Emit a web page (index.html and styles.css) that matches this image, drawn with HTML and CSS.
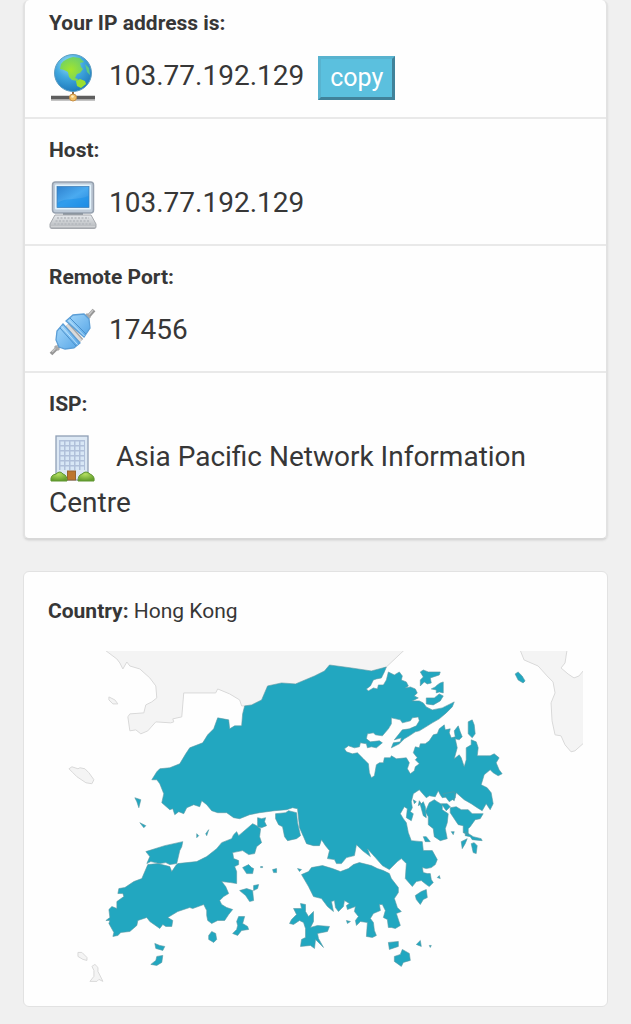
FILE: index.html
```html
<!DOCTYPE html>
<html lang="en">
<head>
  <meta charset="UTF-8">
  <meta name="viewport" content="width=device-width, initial-scale=1.0">
  <title>Your IP address</title>
  <link rel="stylesheet" href="styles.css">
</head>
<body>
  <div class="card info">
    <div class="row">
      <div class="label">Your IP address is:</div>
      <div class="value">
        <svg class="icon" viewBox="0 0 48 48">
          <defs>
            <radialGradient id="sea" cx="40%" cy="25%" r="75%">
              <stop offset="0" stop-color="#9be0f4"/>
              <stop offset=".5" stop-color="#41a8df"/>
              <stop offset="1" stop-color="#1f7bbd"/>
            </radialGradient>
            <radialGradient id="leaf" cx="45%" cy="55%" r="60%">
              <stop offset="0" stop-color="#a4e52b"/>
              <stop offset="1" stop-color="#6cd06a"/>
            </radialGradient>
          </defs>
          <path d="M24 36v7" stroke="#8a6a4a" stroke-width="2"/>
          <path d="M2 46h44" stroke="#c4c4c4" stroke-width="2"/>
          <path d="M2 43.500h44" stroke="#5e5e5e" stroke-width="3.500"/>
          <circle cx="24" cy="19" r="18.500" fill="url(#sea)" stroke="#5c9dc2"/>
          <path d="M12 10c3-4 7-6 12-7l7 1 4 4-4 1 1 4 2 2-3 4-3 1-2 4 3 1-1 2-5-1-3-3-1-5-4-2-4-1z" fill="url(#leaf)"/>
          <path d="M27 27l4-2 5 2 1 3-5 4-4-2z" fill="#9be02f"/>
          <path d="M36 10l4 4 1 7-3-3z" fill="#5cc985"/>
          <circle cx="24" cy="43.500" r="3.500" fill="#f3c164" stroke="#c99045"/>
          <circle cx="23.500" cy="42.500" r="1.300" fill="#fff0c0"/>
        </svg><span>103.77.192.129</span><button class="copy" type="button">copy</button>
      </div>
    </div>

    <div class="row">
      <div class="label">Host:</div>
      <div class="value">
        <svg class="icon" viewBox="0 0 48 48">
          <defs>
            <linearGradient id="screen" x1="0" y1="0" x2="1" y2="1">
              <stop offset="0" stop-color="#2f82cf"/>
              <stop offset=".5" stop-color="#4aaaf0"/>
              <stop offset="1" stop-color="#2388df"/>
            </linearGradient>
            <linearGradient id="keys" x1="0" y1="0" x2="0" y2="1">
              <stop offset="0" stop-color="#e6e9ec"/>
              <stop offset="1" stop-color="#b2b5b9"/>
            </linearGradient>
          </defs>
          <rect x="3.500" y="1" width="41" height="31" rx="3" fill="#bfcbd8" stroke="#96a1af" stroke-width="1.500"/>
          <rect x="6" y="3.500" width="36" height="25" rx="1" fill="#e3f3fc"/>
          <rect x="8" y="5.500" width="32" height="21" fill="url(#screen)" stroke="#3978b3" stroke-width=".7"/>
          <path d="M8.500 22c8-6 19-2 31-7v11h-31z" fill="#168fe9" opacity=".5"/>
          <path d="M14 32h20v3H14z" fill="#8b95a0"/>
          <path d="M6 34h36l5 9v3q0 1.500-2 1.500H3q-2 0-2-1.500v-3z" fill="url(#keys)" stroke="#a5a8ad"/>
          <path d="M8 37h32M6.500 40h35M5 43h38" stroke="#b4b8bd" stroke-width="1.500" stroke-dasharray="2 1.500"/>
          <path d="M2 45.500h44" stroke="#cfd1d4"/>
        </svg><span>103.77.192.129</span>
      </div>
    </div>

    <div class="row">
      <div class="label">Remote Port:</div>
      <div class="value">
        <svg class="icon" viewBox="0 0 48 48">
          <defs>
            <linearGradient id="plug" x1="0" y1="0" x2="1" y2="1">
              <stop offset="0" stop-color="#a5d8fb"/>
              <stop offset="1" stop-color="#55a5e6"/>
            </linearGradient>
          </defs>
          <path d="M2 46l9-9M37 11l8-9" stroke="#979797" stroke-width="3.800"/>
          <path d="M3 44l8-8M38 9l6-7" stroke="#c6c6c6" stroke-width="1.500"/>
          <path d="M6 38l4 4M37 6l4 4" stroke="#aaa" stroke-width="3"/>
          <path d="M18 17l14 16" stroke="#a5a5a5" stroke-width="6"/>
          <path d="M18 17l14 16" stroke="#dadada" stroke-width="3"/>
          <path d="M14 16L31 35 25 40 16 41 10 39 7 32 8 23z" fill="url(#plug)" stroke="#5b9ed6" stroke-width="1.300"/>
          <path d="M17 13l7-6 11-1 5 5 1 9-6 9z" fill="url(#plug)" stroke="#5b9ed6" stroke-width="1.300"/>
          <path d="M11 20l16 18M21 10l16 16" stroke="#4a8fca"/>
          <path d="M12.500 18.500l16 18M19.500 12l16 16" stroke="#bfe3fb"/>
        </svg><span>17456</span>
      </div>
    </div>

    <div class="row">
      <div class="label">ISP:</div>
      <div class="value">
        <svg class="icon" viewBox="0 0 48 48">
          <defs>
            <pattern id="windows" width="5" height="5" patternUnits="userSpaceOnUse">
              <rect width="5" height="5" fill="#b0c0da"/>
              <rect x="1.500" y="1.500" width="3.500" height="3.500" fill="#d8e7f6"/>
            </pattern>
            <radialGradient id="bush" cx="45%" cy="25%" r="70%">
              <stop offset="0" stop-color="#b4df60"/>
              <stop offset="1" stop-color="#659f2c"/>
            </radialGradient>
          </defs>
          <rect x="7" y="1" width="32" height="44" fill="#dce8f4" stroke="#8f9fb5" stroke-width="1.300"/>
          <rect x="10" y="5" width="26" height="30" fill="url(#windows)"/>
          <rect x="18.500" y="36" width="8" height="9" fill="#bd762c" stroke="#976331"/>
          <path d="M2 46q-1-6 5-7 4-4 7 0 4 1 4 7z" fill="url(#bush)" stroke="#5f9530"/>
          <path d="M29 46q0-6 4-7 4-4 8 0 5 2 4 7z" fill="url(#bush)" stroke="#5f9530"/>
        </svg><span>&nbsp;Asia Pacific Network Information Centre</span>
      </div>
    </div>
  </div>

  <div class="card country">
    <p class="country-name"><strong>Country:</strong> Hong Kong</p>

    <svg class="map" viewBox="48 650 536 332" role="img" aria-label="Map of Hong Kong">
      <!-- neighbouring coast -->
      <g class="land">
        <path d="M105 649l12 9 3 4 3 6 4-7 3 4 10 3 10 9 6 8 1 12-5 4-6 3-2 8-14 1-2 3 2 14 6-1 5 4 7-3 8-9 15 1 3-1-1-3 9-2 2-24 32 0 2-4 12 5 10 6 2 6 60 0 85-39 18-17z"/>
        <path d="M521 649l4 10 14 6 9 10 6 6 2 11-4 10 1 18 3 14 6 1 4 9 6 7 4-1 9-8V649z"/>
        <path d="M109 696l6 3 3 4-5 0-4-4z"/>
        <path d="M69 768l3-2 6 2 2-1 5 1 4 4 5 7-2 4-6-1-9-6-4-4z"/>
        <path d="M78 952l4 0 5 5 0 3-4-1-5-3zM92 966l3-2 3 3 0 4 5 10-4-2-2 2-7 0 4-5 0-6z"/>
      </g>
      <path class="water" d="M568 649l-2 13-4 5 7 6 6 4 5-2 5-6V649z"/>

      <!-- mainland -->
      <g class="region">
        <path d="M245 705L252 704 262 699 268 685 282 682 296 683 315 675 325 670 330 664 352 667 372 670 387 666 385 671 382 677 377 678 374 679 371 685 367 688 369 690 374 687 378 688 379 684 384 684 387 679 389 671 395 674 400 671 403 675 402 679 407 681 409 685 406 687 411 686 416 688 418 692 415 695 419 697 413 700 420 700 424 702 427 706 433 709 443 707 455 701 453 706 447 712 440 718 433 722 425 727 420 730 416 731 410 735 405 738 400 743 392 747 394 742 401 741 402 737 395 739 399 734 403 729 410 728 417 725 420 720 419 716 413 717 411 720 403 722 401 719 392 717 392 723 389 728 383 735 376 734 374 732 368 733 367 738 371 741 380 740 383 742 377 747 372 746 368 747 367 743 361 742 360 746 355 747 349 745 345 748 347 751 353 753 358 752 364 758 369 763 370 772 372 777 375 775 377 764 380 762 384 762 385 757 391 757 392 755 397 758 407 757 410 762 408 768 411 773 415 770 416 766 420 763 416 759 418 757 414 752 416 746 420 747 421 743 426 743 430 740 434 734 438 733 440 728 445 724 446 729 451 728 450 732 452 737 456 736 455 730 459 725 461 731 463 736 460 739 456 738 458 747 455 758 460 754 462 757 465 766 467 759 467 747 472 744 472 739 477 741 479 747 478 755 487 755 491 755 495 753 500 757 497 762 500 769 503 773 499 775 494 772 491 769 485 774 482 784 488 787 492 792 494 803 491 809 487 803 483 810 478 807 472 803 465 799 457 792 455 800 449 796 443 797 441 794 439 790 436 796 430 795 427 797 420 789 414 793 412 801 413 807 411 811 414 813 412 820 407 817 408 808 405 806 401 813 404 818 407 822 409 832 412 840 423 841 424 850 433 850 438 859 436 864 432 867 427 868 423 867 424 872 428 873 431 873 432 879 434 882 430 886 427 884 422 880 417 881 413 886 406 878 407 863 402 858 398 861 390 869 383 865 376 857 368 848 371 856 363 850 357 844 355 855 347 857 342 863 337 863 335 859 328 858 330 850 326 845 322 839 320 845 314 845 307 843 304 836 300 827 298 808 293 807 287 809 275 810 260 812 250 814 240 818 234 817 227 812 218 812 212 810 207 804 202 800 200 806 194 804 187 807 184 813 179 811 175 814 173 808 170 809 162 802 164 793 160 783 157 779 152 779 157 771 160 768 170 767 180 763 186 753 190 747 203 742 208 734 214 728 218 717 229 719 230 728 235 725 242 725 243 713z"/>
        <!-- Mirs Bay -->
        <path d="M421 671l3-2 5 2 12 0-1 3-9 3 1 5-4 1-3-2-4 4 0-6 3-3zM436 686l2-2 3-2 3-1 0 11-4-1-3 1 0-3-5-1zM427 697l8 0 5-4 4 2-3 5-7 4-7-1z"/>
        <path d="M516 673l3-2 4 4 3 5-2 2-5-3zM469 721l4-2 2 5 1 9-3 4-4-4z"/>
        <!-- Sai Kung islands -->
        <path d="M430 802l5-3 3 2 5 3 0 5 6 4-1 9-2 6 2 10-7 2-6-4-1-8-5-4 0-8-3-5z"/>
        <path d="M451 807l6-1 5 3 7 0 4 4 11 0-3 5-5 1-5 7-2 2 0 6-5-2 0-7-5-1-8-12zM466 831l5 3 3 2 8 2 1 2-10-1-2-3-5-1z"/>
        <path d="M421 804l3-3 2 5 1 11-3-2zM442 803l6 0 3 3-4 4zM424 836l3 0 4 5-5 0zM462 841l6-3-2 5-3 5zM472 843l3-1 3 3-1 8-3-1zM452 831l3 0-1 3z"/>
        <path d="M414 799l3 2-2 2zM420 800l2 3-3 2zM444 793l11-2 1 6-6 4z"/>
        <!-- Lantau -->
        <path d="M148 864L158 863 170 866 172 871 176 865 178 863 197 861 207 856 217 848 222 842 232 838 234 834 237 831 239 835 253 823 257 825 261 828 260 836 262 842 257 846 255 853 249 854 243 850 233 852 234 858 239 860 239 864 235 866 237 871 237 883 231 882 222 881 226 886 229 893 224 896 220 900 222 904 227 907 233 909 229 914 225 920 218 920 212 923 208 920 207 915 207 910 204 904 193 908 190 907 178 911 168 917 173 920 172 926 166 926 163 924 160 928 150 921 147 917 138 920 137 925 130 931 121 932 118 935 113 936 114 932 109 923 110 920 106 920 110 917 109 909 112 906 117 908 117 901 124 896 123 893 118 893 119 888 125 887 134 881 142 878z"/>
        <path d="M146 851l19-6 18-4-1 5-2 4-3 13-7 1-4-2-6 1-9-2-4 2 3-7z"/>
        <!-- Tsing Yi and nearby -->
        <path d="M276 813l10-1 3-2 8 2 1 10 3 13-4 3-9 2-3-4-2-10-4-2-3-6zM258 817l4 1 4-1-1 4 2 4-5 2-4-1 0-5z"/>
        <path d="M243 867l6-3 3 3 2 1-1 5-6 0-2-3zM240 890l7-2 6 2 1 10-4 1-4-6zM254 885l5-1-1 4-4 2zM239 916l6 0-2 7 5 3 1 3-7 1-4 5-5-2 4-4 1-4-1-4zM209 935l3-4 4 2 1 6-3 3-5-3zM155 943l5 2 5 1-2 4-7-2zM157 956l6-1-1 7-5 3-6-1 5-4z"/>
        <path d="M135 797l6 2-2 8-2-6zM140 822l6 3-2 2zM197 833l2 2-2 2zM206 833l3-4-2 6zM261 866h2v1h-2zM273 869l4-1 0 4-3 0zM298 868l4 1-2 2z"/>
        <!-- Hong Kong Island -->
        <path d="M302 874L309 871 312 867 323 865 333 868 341 871 349 868 354 864 360 862 372 865 378 868 384 870 390 873 392 878 399 887 399 892 395 898 398 907 402 911 397 913 401 925 396 928 392 927 389 927 388 919 384 917 386 910 383 904 380 904 381 910 374 913 371 918 374 922 375 930 377 935 373 937 367 936 368 922 361 921 357 925 356 920 359 916 355 911 356 906 348 909 347 905 350 903 345 900 344 906 339 911 336 907 335 900 332 901 334 911 328 906 322 898 314 896 309 886z"/>
        <!-- Lamma and the southern islands -->
        <path d="M292 919l5-5-3-6 8 0-1-5 5 1 0 7 3 5 5-5 0 10-3 6 7-2 12 1-2 5-10 2 1 5 5 9-8-8-1 9-4-3-10 1 1-7 4-2 0-9-2-6-4-2-6 4-4-1zM389 942l10-1 0 5-9 3zM395 956l6-2 2-5 7 4 1 7-7 2-2 4-7-5zM417 944l4-4 1 6zM416 895l6-4 5-2 1 8-4 2-3 5-4-5zM347 920l4 1-3 2zM438 877l2-2 1 3zM430 945l2 0-1 2z"/>
      </g>
    </svg>
  </div>
</body>
</html>
```
FILE: styles.css
```css
body {
  margin: 0;
  padding-bottom: 16px;
  background-color: #f0f0f0;
  font-family: Roboto, Arial, sans-serif;
  color: #373737;
}
.card {
  margin: 0 23px;
  background: #fefefe;
  border: 1px solid #e2e2e2;
  border-radius: 6px;
}
.info {
  border-width: 0 2px 2px;
  border-bottom-color: #d8d8d8;
  box-shadow: 0 1px 2px #ddd;
}
.row {
  padding: 19px 24px 18px;
  border-bottom: 2px solid #e9e9e9;
}
.row:first-child {
  padding-top: 11px;
}
.row:last-child {
  padding-bottom: 12px;
  border-bottom: 0;
}
.label {
  margin-bottom: 18px;
  font-size: 21px;
  font-weight: bold;
  line-height: 24px;
}
.value {
  font-size: 28px;
  line-height: 46px;
}
.icon {
  width: 48px;
  height: 48px;
  margin: -4px 12px -4px 0;
  vertical-align: middle;
}
.copy {
  height: 44px;
  margin: -4px 0 -4px 14px;
  padding: 0 9px;
  background: #5bc0de;
  border: 3px solid;
  border-color: #58b3cf #40829a #40829a #58b3cf;
  color: white;
  font-family: inherit;
  font-size: 25px;
  line-height: 36px;
  vertical-align: middle;
  cursor: pointer;
}
.country {
  margin-top: 31px;
  padding: 27px 24px 24px;
}
.country-name {
  margin: 0 0 28px;
  font-size: 21px;
  line-height: 24px;
}
.map {
  display: block;
  width: 100%;
  height: auto;
}
.land path {
  fill: #f4f4f4;
  stroke: #d9d9d9;
}
.water {
  fill: #fefefe;
  stroke: #d9d9d9;
}
.region path {
  fill: #22a7c0;
  stroke: #5a98a2;
  stroke-width: 0.6;
  stroke-linejoin: round;
}
```
